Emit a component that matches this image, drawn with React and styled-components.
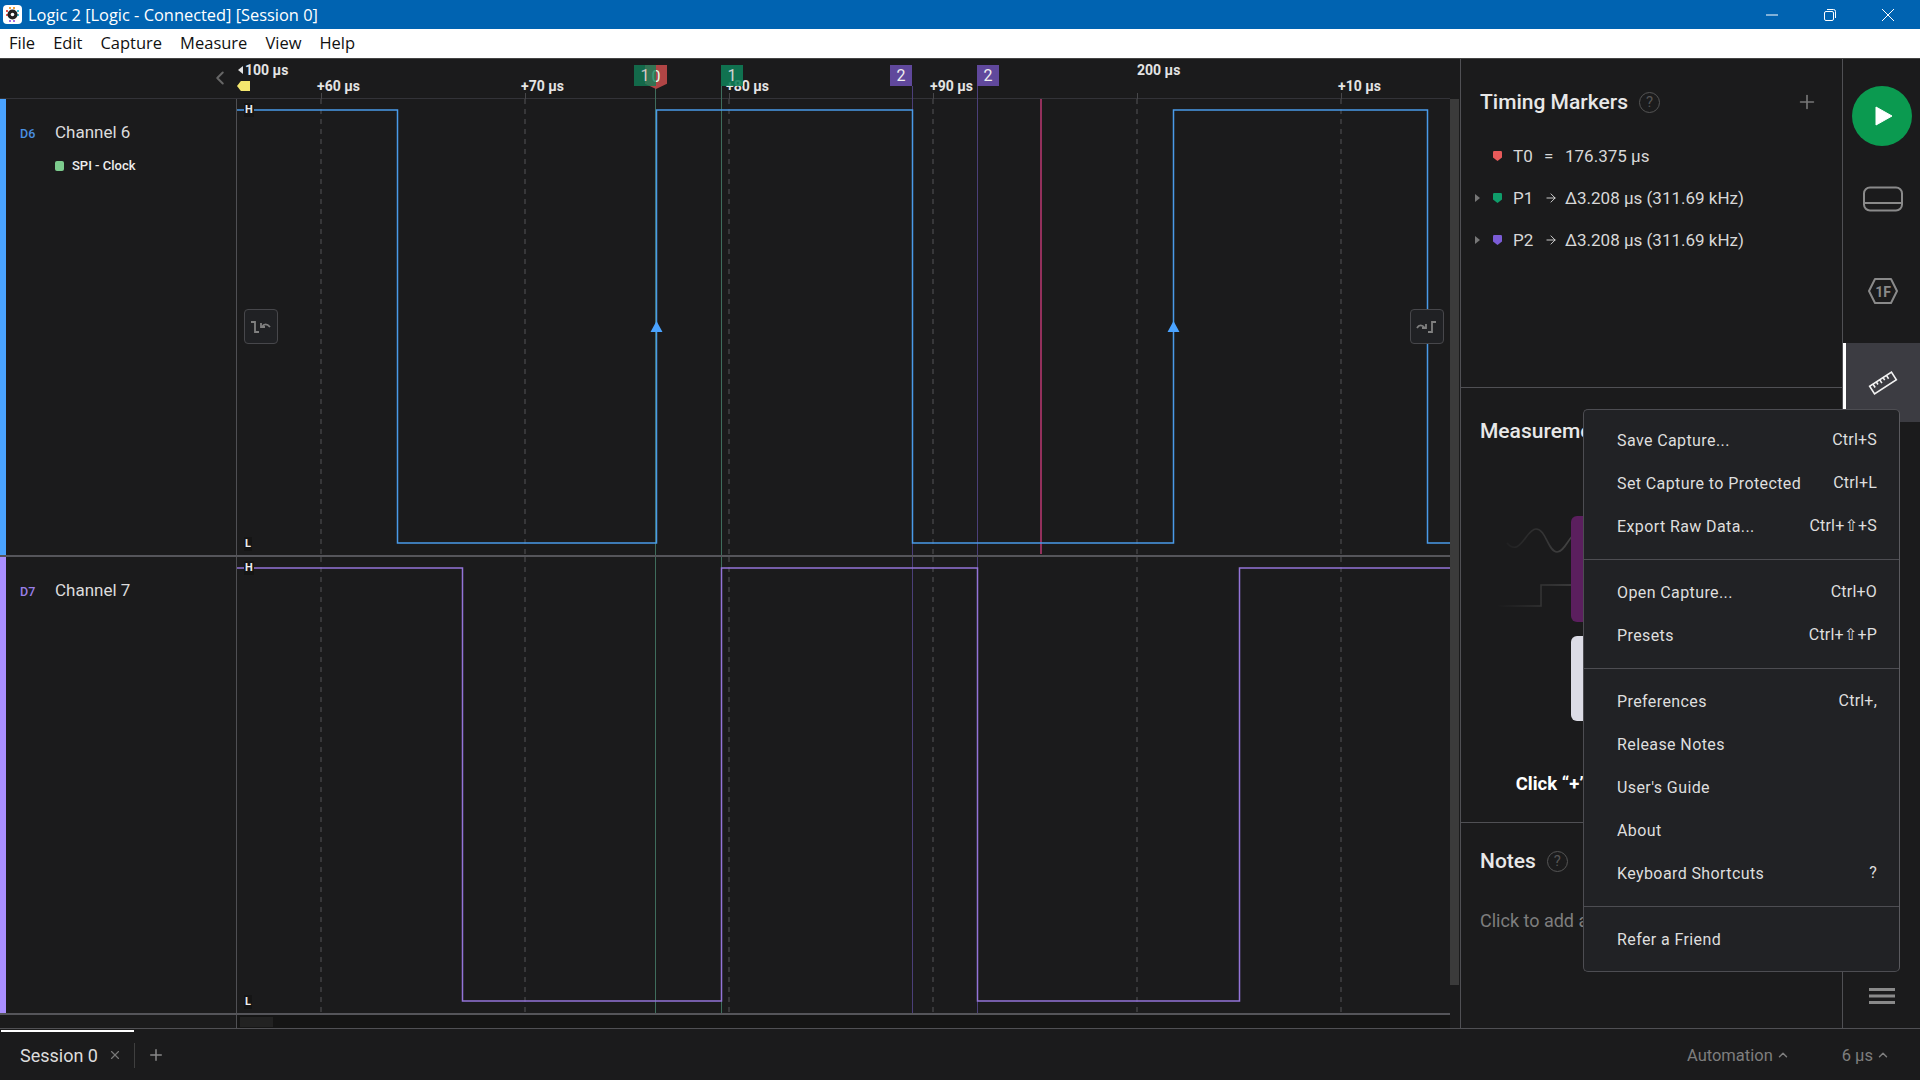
import React from "react";
import styled, { createGlobalStyle } from "styled-components";
import { ArrowRight, ChevronLeft, ChevronUp, Plus, X } from "lucide-react";

const Global = createGlobalStyle`
  html, body { margin: 0; padding: 0; background: #1b1b1b; overflow: hidden; }
  * { box-sizing: border-box; }
`;

const BG = "#1b1b1c";
const RULE = "#505054";

const Root = styled.div`
  position: relative;
  width: 1920px;
  height: 1080px;
  display: flex;
  flex-direction: column;
  background: ${BG};
  color: #ddd;
  font-family: Roboto, "Liberation Sans", sans-serif;
  overflow: hidden;
`;

const TitleBar = styled.header`
  height: 29px;
  flex: none;
  display: flex;
  align-items: center;
  padding: 0 3px 0 3px;
  background: #0063b1;
  color: #fff;
  font: 16.4px "Open Sans", sans-serif;
`;
const TitleText = styled.span`
  margin-left: 6px;
  flex: 1;
`;
const WinControl = styled.div`
  width: 58px;
  height: 29px;
  display: flex;
  align-items: center;
  justify-content: center;
`;

const MenuBar = styled.nav`
  height: 30px;
  flex: none;
  display: flex;
  align-items: center;
  padding: 0 0 3px 9px;
  gap: 18px;
  background: #fff;
  border-bottom: 1px solid #444;
  color: #111;
  font: 16.5px "Open Sans", sans-serif;
`;

const Workspace = styled.main`
  flex: none;
  height: 970px;
  display: flex;
  border-bottom: 1px solid ${RULE};
`;
const WaveColumn = styled.section`
  width: 1461px;
  flex: none;
  display: flex;
  border-right: 1px solid ${RULE};
`;
const Traces = styled.div`
  width: 1450px;
  display: flex;
  flex-direction: column;
`;
const VScrollTrack = styled.div`
  width: 10px;
  padding-top: 40px;
`;
const VScrollThumb = styled.div`
  width: 9px;
  height: 886px;
  background: #3b3b3b;
`;

const Ruler = styled.div`
  position: relative;
  height: 40px;
  flex: none;
  border-bottom: 1px solid #333338;
`;
const CollapseBtn = styled.span`
  position: absolute;
  left: 209px;
  top: 8px;
  color: #666;
  display: flex;
`;
const TimeLabel = styled.span`
  position: absolute;
  left: ${(p) => p.$x}px;
  top: ${(p) => p.$y}px;
  font-size: 14px;
  font-weight: 700;
  line-height: 16px;
  color: #e4e4e4;
  white-space: nowrap;
`;
const StartMark = styled.span`
  position: absolute;
  left: 237px;
  top: 22px;
  width: 13px;
  height: 10px;
  background: #f4e76e;
  clip-path: polygon(30% 0, 100% 0, 100% 100%, 30% 100%, 0 50%);
`;
const StartArrow = styled.span`
  position: absolute;
  left: 238px;
  top: 7px;
  width: 5px;
  height: 8px;
  background: #e4e4e4;
  clip-path: polygon(100% 0, 100% 100%, 0 50%);
`;
const Tick = styled.span`
  position: absolute;
  left: ${(p) => p.$x}px;
  top: ${(p) => p.$top}px;
  bottom: -1px;
  width: 1px;
  background: ${(p) => p.$color};
`;
const Flag = styled.span`
  position: absolute;
  left: ${(p) => p.$x}px;
  top: 6px;
  width: 22px;
  height: 21px;
  display: flex;
  align-items: center;
  justify-content: center;
  background: ${(p) => p.$color};
  opacity: ${(p) => p.$alpha || 1};
  color: #eee;
  font-size: 16px;
  line-height: 19px;
`;
const TimeFlag = styled.span`
  position: absolute;
  left: 645px;
  top: 6px;
  width: 22px;
  height: 24px;
  display: flex;
  align-items: flex-start;
  justify-content: center;
  padding-top: 2px;
  background: #b04545;
  color: #dfe;
  font-size: 16px;
  line-height: 19px;
  clip-path: polygon(0 0, 100% 0, 100% 78%, 50% 100%, 0 78%);
`;

const ChannelRow = styled.div`
  height: 458px;
  flex: none;
  display: flex;
  border-bottom: 2px solid #55555a;
`;
const Stripe = styled.div`
  width: 6px;
  flex: none;
  background: ${(p) => p.$color};
`;
const ChannelInfo = styled.div`
  width: 231px;
  flex: none;
  border-right: 1px solid ${RULE};
  padding: 22px 0 0 14px;
`;
const ChannelHead = styled.div`
  display: flex;
  align-items: center;
  height: 22px;
`;
const ChannelId = styled.span`
  width: 35px;
  font-size: 12.5px;
  font-weight: 500;
  color: ${(p) => p.$color};
  padding-top: 2px;
`;
const ChannelName = styled.span`
  font-size: 17px;
  color: #dcdcdc;
`;
const Analyzer = styled.div`
  display: flex;
  align-items: center;
  gap: 8px;
  margin: 15px 0 0 35px;
  font-size: 13px;
  font-weight: 500;
  color: #eee;
`;
const AnalyzerDot = styled.span`
  width: 9px;
  height: 10px;
  border-radius: 2px;
  background: #7ccb8d;
`;
const Plot = styled.div`
  position: relative;
  flex: 1;
`;
const PlotCanvas = styled.svg`
  display: block;
  width: 1213px;
  height: 456px;
`;
const LevelMark = styled.span`
  position: absolute;
  left: 7px;
  top: ${(p) => p.$top}px;
  padding: 0 1px;
  font-size: 11px;
  font-weight: 700;
  line-height: 14px;
  background: #151515;
  color: #eee;
`;
const EdgeButton = styled.button`
  position: absolute;
  top: 210px;
  ${(p) => (p.$side === "left" ? "left: 7px;" : "right: 6px;")}
  width: 34px;
  height: 35px;
  padding: 0;
  display: flex;
  align-items: center;
  justify-content: center;
  border: 1px solid #47474b;
  border-radius: 4px;
  background: #202124;
`;

const HScrollRow = styled.div`
  flex: 1;
  display: flex;
`;
const HScrollInfo = styled.div`
  width: 237px;
  flex: none;
  border-right: 1px solid ${RULE};
`;
const HScrollTrack = styled.div`
  flex: 1;
  background: #151515;
  padding: 2px 0 0 3px;
`;
const HScrollThumb = styled.div`
  width: 33px;
  height: 10px;
  background: #222;
`;

const Panel = styled.aside`
  width: 382px;
  flex: none;
  display: flex;
  flex-direction: column;
  border-right: 1px solid ${RULE};
`;
const TimingSection = styled.section`
  height: 329px;
  flex: none;
  padding-top: 30px;
  border-bottom: 1px solid ${RULE};
`;
const MeasureSection = styled.section`
  height: 435px;
  flex: none;
  padding-top: 30px;
  border-bottom: 1px solid ${RULE};
`;
const NotesSection = styled.section`
  flex: 1;
  padding-top: 25px;
`;
const SectionHead = styled.div`
  height: 26px;
  display: flex;
  align-items: center;
  padding: 0 24px 0 19px;
  gap: 11px;
`;
const SectionTitle = styled.h2`
  margin: 0;
  font-size: 21px;
  font-weight: 500;
  line-height: 26px;
  color: #e8e8e8;
`;
const HelpBadge = styled.span`
  width: 21px;
  height: 21px;
  display: flex;
  align-items: center;
  justify-content: center;
  border: 1.5px solid #555;
  border-radius: 50%;
  color: #555;
  font-size: 15px;
`;
const AddAction = styled.span`
  margin-left: auto;
  display: flex;
  color: #777;
`;
const MarkerList = styled.div`
  margin-top: 20px;
`;
const MarkerRow = styled.div`
  height: 42px;
  display: flex;
  align-items: center;
  padding-left: 14px;
  font-size: 17px;
  color: #d8d8d8;
`;
const Expander = styled.span`
  width: 18px;
  flex: none;
  display: block;
  &::before {
    content: "";
    display: ${(p) => (p.$hidden ? "none" : "block")};
    width: 5px;
    height: 8px;
    background: #777;
    clip-path: polygon(0 0, 100% 50%, 0 100%);
  }
`;
const MarkerName = styled.span`
  width: 31px;
  margin-left: 11px;
  flex: none;
`;
const Relation = styled.span`
  width: 21px;
  flex: none;
  display: flex;
`;
const Illustration = styled.svg`
  display: block;
  width: 381px;
  height: 270px;
  margin-top: 26px;
`;
const Hint = styled.p`
  margin: 32px 0 0;
  padding-right: 10px;
  text-align: center;
  font-size: 18.5px;
  font-weight: 700;
  line-height: 24px;
  color: #fff;
`;
const NotesHint = styled.p`
  margin: 35px 0 0 19px;
  font-size: 18px;
  line-height: 24px;
  color: #7e7e7e;
`;

const Sidebar = styled.nav`
  flex: 1;
  display: flex;
  flex-direction: column;
  align-items: stretch;
  gap: 13px;
  padding-top: 27px;
`;
const PlayButton = styled.div`
  width: 60px;
  height: 60px;
  margin-left: 9px;
  flex: none;
  display: flex;
  align-items: center;
  justify-content: center;
  padding-left: 4px;
  border-radius: 50%;
  background: #0b9a50;
`;
const SideTile = styled.div`
  height: 79px;
  flex: none;
  display: flex;
  align-items: center;
  justify-content: center;
  padding-left: 2px;
  ${(p) => p.$active && "background:#3c3c42; border-left:3px solid #fff; padding-left:0;"}
`;
const SideBottom = styled.div`
  margin-top: auto;
  height: 40px;
  display: flex;
  align-items: flex-start;
  justify-content: center;
`;

const Footer = styled.footer`
  flex: 1;
  display: flex;
  align-items: stretch;
  font-size: 16.5px;
`;
const SessionTab = styled.div`
  width: 133px;
  margin: 1px 0 0 1px;
  display: flex;
  align-items: center;
  padding: 0 0 2px 19px;
  border-top: 2px solid #fff;
  font-size: 18px;
  color: #ddd;
`;
const TabClose = styled.span`
  margin-left: 10px;
  display: flex;
  color: #777;
`;
const TabSep = styled.span`
  width: 1px;
  height: 25px;
  margin-top: 14px;
  background: #3f3f3f;
`;
const TabAdd = styled.span`
  margin-left: 12px;
  display: flex;
  align-items: center;
  color: #888;
`;
const StatusGroup = styled.div`
  margin-left: auto;
  display: flex;
  align-items: center;
  padding: 1px 30px 0 0;
  gap: 52px;
  color: #7e7e7e;
`;
const StatusItem = styled.span`
  display: flex;
  align-items: center;
  gap: 3px;
`;

const AppMenu = styled.div`
  position: absolute;
  left: 1583px;
  top: 409px;
  width: 317px;
  height: 563px;
  padding-top: 9px;
  background: #212225;
  border: 1px solid #4d4d52;
  border-radius: 5px;
  border-right-color: #5a5a5f;
`;
const MenuGroup = styled.div`
  padding: 11px 0;
  border-bottom: 1px solid ${(p) => (p.$last ? "transparent" : "#4d4d52")};
  &:first-child {
    padding-top: 0;
  }
`;
const MenuEntry = styled.div`
  height: 43px;
  display: flex;
  align-items: center;
  justify-content: space-between;
  padding: 0 22px 0 33px;
  font-size: 16px;
  letter-spacing: 0.4px;
  color: #dedede;
`;
const Shortcut = styled.span`
  padding-bottom: 3px;
  letter-spacing: 0.2px;
  font-family: Roboto, "DejaVu Sans", sans-serif;
`;

const GRID = [321, 525, 729, 933, 1137, 1341];
const GREEN_LINE = "#3f6d5c";
const PURPLE_LINE = "#4b3f78";
const MARKS = [
  [655.5, GREEN_LINE],
  [721.5, GREEN_LINE],
  [912.5, PURPLE_LINE],
  [977.5, PURPLE_LINE],
];

const Logo = () => (
  <svg width="19" height="19" viewBox="0 0 19 19">
    <rect width="19" height="19" rx="4" fill="#fff" />
    <path d="M3 6h2M3 10h2" stroke="#e5554f" strokeWidth="2" />
    <path d="M7 2v2M11 2v2" stroke="#f2a33a" strokeWidth="2" />
    <path d="M14 6h2M14 10h2" stroke="#3fc1d9" strokeWidth="2" />
    <path d="M7 15v2M11 15v2" stroke="#a56ee0" strokeWidth="2" />
    <circle cx="9.5" cy="9.5" r="5" fill="#222" />
    <circle cx="9.5" cy="9.5" r="1.8" fill="#fff" />
  </svg>
);

const TraceGrid = ({ top, bottom }) => (
  <>
    {GRID.map((x) => (
      <line key={x} x1={x} x2={x} y1={top} y2={bottom} stroke="#47474a" strokeWidth="1.3" strokeDasharray="5 5" />
    ))}
    {MARKS.map(([x, c]) => (
      <line key={x} x1={x} x2={x} y1={top} y2={bottom} stroke={c} strokeWidth="1" />
    ))}
  </>
);

const StepBack = () => (
  <svg width="22" height="16" viewBox="0 0 22 16" fill="none" stroke="#808080" strokeWidth="1.8">
    <path d="M1 3h4v10h4" />
    <path d="M12 8c2-3.5 5-3.5 8 0" />
    <path d="M11 4v4h4" />
  </svg>
);
const StepForward = () => (
  <svg width="22" height="16" viewBox="0 0 22 16" fill="none" stroke="#808080" strokeWidth="1.8">
    <path d="M12 13h4V3h4" />
    <path d="M1 9c2-3.5 5-3.5 8 0" />
    <path d="M10 5v4H6" />
  </svg>
);

const MarkerGlyph = ({ color }) => (
  <svg width="9" height="10" viewBox="0 0 9 10" style={{ flex: "none" }}>
    <path d="M0 1.2Q0 0 1.2 0h6.6Q9 0 9 1.2V6.5L4.5 10 0 6.5z" fill={color} />
  </svg>
);

const MarkerLine = ({ color, name, expand, children, equals }) => (
  <MarkerRow>
    <Expander $hidden={!expand} />
    <MarkerGlyph color={color} />
    <MarkerName>{name}</MarkerName>
    <Relation>{equals ? "=" : <ArrowRight size={14} strokeWidth={1.6} />}</Relation>
    <span>{children}</span>
  </MarkerRow>
);

const MenuRows = [
  [["Save Capture...", "Ctrl+S"], ["Set Capture to Protected", "Ctrl+L"], ["Export Raw Data...", "Ctrl+⇧+S"]],
  [["Open Capture...", "Ctrl+O"], ["Presets", "Ctrl+⇧+P"]],
  [["Preferences", "Ctrl+,"], ["Release Notes"], ["User's Guide"], ["About"], ["Keyboard Shortcuts", "?"]],
  [["Refer a Friend"]],
];

export default function App() {
  return (
    <Root>
      <Global />
      <TitleBar>
        <Logo />
        <TitleText>Logic 2 [Logic - Connected] [Session 0]</TitleText>
        <WinControl>
          <svg width="14" height="14" viewBox="0 0 14 14"><path d="M1 7h12" stroke="#fff" strokeWidth="1" /></svg>
        </WinControl>
        <WinControl>
          <svg width="14" height="14" viewBox="0 0 14 14" fill="none" stroke="#fff"><rect x="1.5" y="3.5" width="9" height="9" rx="1.5" /><path d="M4 1.5h6.5q2 0 2 2V10" /></svg>
        </WinControl>
        <WinControl>
          <svg width="14" height="14" viewBox="0 0 14 14"><path d="M1 1l12 12M13 1L1 13" stroke="#fff" strokeWidth="1" /></svg>
        </WinControl>
      </TitleBar>
      <MenuBar>
        {["File", "Edit", "Capture", "Measure", "View", "Help"].map((m) => (
          <span key={m}>{m}</span>
        ))}
      </MenuBar>
      <Workspace>
        <WaveColumn>
          <Traces>
            <Ruler>
              <CollapseBtn><ChevronLeft size={22} strokeWidth={2.2} /></CollapseBtn>
              <StartArrow />
              <TimeLabel $x={245} $y={3}>100 µs</TimeLabel>
              <StartMark />
              {[[317, "+60 µs"], [521, "+70 µs"], [726, "+80 µs"], [930, "+90 µs"], [1338, "+10 µs"]].map(([x, t]) => (
                <TimeLabel key={t} $x={x} $y={19}>{t}</TimeLabel>
              ))}
              <TimeLabel $x={1137} $y={3}>200 µs</TimeLabel>
              {GRID.map((x) => (
                <Tick key={x} $x={x} $top={34} $color="#47474a" />
              ))}
              {MARKS.map(([x, c]) => (
                <Tick key={x} $x={Math.floor(x)} $top={27} $color={c} />
              ))}
              <TimeFlag>0</TimeFlag>
              <Flag $x={634} $color="#118058" $alpha={0.78}>1</Flag>
              <Flag $x={721} $color="#0f7f58" $alpha={0.88}>1</Flag>
              <Flag $x={890} $color="#60489c">2</Flag>
              <Flag $x={977} $color="#60489c">2</Flag>
            </Ruler>
            <ChannelRow>
              <Stripe $color="#4aa3ff" />
              <ChannelInfo>
                <ChannelHead>
                  <ChannelId $color="#4a90e2">D6</ChannelId>
                  <ChannelName>Channel 6</ChannelName>
                </ChannelHead>
                <Analyzer>
                  <AnalyzerDot />
                  SPI - Clock
                </Analyzer>
              </ChannelInfo>
              <Plot>
                <PlotCanvas viewBox="237 99 1213 456">
                  <TraceGrid top={99} bottom={555} />
                  <line x1="1041" x2="1041" y1="99" y2="554" stroke="#93305c" strokeWidth="2" />
                  <path d="M237 110H397.5V543H656.5V110H912.5V543H1173.5V110H1427.5V543H1450" fill="none" stroke="#4a9ae8" strokeWidth="1.5" />
                  <path d="M656.5 321l6 11h-12zM1173.5 321l6 11h-12z" fill="#4aa3ff" />
                </PlotCanvas>
                <LevelMark $top={4}>H</LevelMark>
                <LevelMark $top={438}>L</LevelMark>
                <EdgeButton $side="left"><StepBack /></EdgeButton>
                <EdgeButton $side="right"><StepForward /></EdgeButton>
              </Plot>
            </ChannelRow>
            <ChannelRow>
              <Stripe $color="#a98eff" />
              <ChannelInfo>
                <ChannelHead>
                  <ChannelId $color="#9a7fe8">D7</ChannelId>
                  <ChannelName>Channel 7</ChannelName>
                </ChannelHead>
              </ChannelInfo>
              <Plot>
                <PlotCanvas viewBox="237 557 1213 456">
                  <TraceGrid top={557} bottom={1013} />
                  <path d="M237 568H462.5V1001H721.5V568H977.5V1001H1239.5V568H1450" fill="none" stroke="#9474d8" strokeWidth="1.5" />
                </PlotCanvas>
                <LevelMark $top={4}>H</LevelMark>
                <LevelMark $top={438}>L</LevelMark>
              </Plot>
            </ChannelRow>
            <HScrollRow>
              <HScrollInfo />
              <HScrollTrack><HScrollThumb /></HScrollTrack>
            </HScrollRow>
          </Traces>
          <VScrollTrack><VScrollThumb /></VScrollTrack>
        </WaveColumn>
        <Panel>
          <TimingSection>
            <SectionHead>
              <SectionTitle>Timing Markers</SectionTitle>
              <HelpBadge>?</HelpBadge>
              <AddAction><Plus size={22} strokeWidth={1.8} /></AddAction>
            </SectionHead>
            <MarkerList>
              <MarkerLine color="#e85a5a" name="T0" equals>176.375 µs</MarkerLine>
              <MarkerLine color="#0f9d6a" name="P1" expand>Δ3.208 µs (311.69 kHz)</MarkerLine>
              <MarkerLine color="#7b5cd6" name="P2" expand>Δ3.208 µs (311.69 kHz)</MarkerLine>
            </MarkerList>
          </TimingSection>
          <MeasureSection>
            <SectionHead>
              <SectionTitle>Measurements</SectionTitle>
            </SectionHead>
            <Illustration viewBox="1461 470 381 270">
              <defs>
                <linearGradient id="fadeWave" gradientUnits="userSpaceOnUse" x1="1497" x2="1583" y1="0" y2="0">
                  <stop offset="0" stopColor="#4a4a4a" stopOpacity="0" />
                  <stop offset="1" stopColor="#4a4a4a" />
                </linearGradient>
              </defs>
              <path d="M1507 543C1520 558 1526 529 1536 529C1546 529 1548 552 1557 552C1566 552 1570 530 1583 530H1600" fill="none" stroke="url(#fadeWave)" strokeWidth="1.6" />
              <path d="M1497 606H1541V585H1600" fill="none" stroke="url(#fadeWave)" strokeWidth="1.6" />
              <rect x="1571" y="516" width="120" height="106" rx="6" fill="#5b1f5e" />
              <rect x="1571" y="636" width="120" height="85" rx="6" fill="#dcdce6" />
            </Illustration>
            <Hint>Click “+” to add a measurement</Hint>
          </MeasureSection>
          <NotesSection>
            <SectionHead>
              <SectionTitle>Notes</SectionTitle>
              <HelpBadge>?</HelpBadge>
            </SectionHead>
            <NotesHint>Click to add a note</NotesHint>
          </NotesSection>
        </Panel>
        <Sidebar>
          <PlayButton>
            <svg width="18" height="20" viewBox="0 0 18 20"><path d="M1 1l16 9L1 19z" fill="#fff" stroke="#fff" strokeLinejoin="round" /></svg>
          </PlayButton>
          <SideTile>
            <svg width="42" height="26" viewBox="0 0 42 26" fill="none" stroke="#8a8a8a" strokeWidth="2">
              <rect x="2" y="1.5" width="38" height="23" rx="6" />
              <path d="M2 17h38" />
            </svg>
          </SideTile>
          <SideTile>
            <svg width="32" height="28" viewBox="0 0 32 28">
              <path d="M8 2h16l6 12-6 12H8L2 14z" fill="none" stroke="#8a8a8a" strokeWidth="2" strokeLinejoin="round" />
              <text x="16" y="19.5" textAnchor="middle" fontSize="14" fontWeight="700" fontFamily="Roboto" fill="#8a8a8a">1F</text>
            </svg>
          </SideTile>
          <SideTile $active>
            <svg width="30" height="26" viewBox="0 0 30 26" fill="none" stroke="#f2f2f2" strokeWidth="1.6">
              <g transform="rotate(-33 15 13)">
                <rect x="2" y="8.5" width="26" height="9" />
                <path d="M6 8.5v4M10 8.5v3M14 8.5v4M18 8.5v3M22 8.5v4" />
              </g>
            </svg>
          </SideTile>
          <SideBottom>
            <svg width="26" height="16" viewBox="0 0 26 16" fill="#8a8a8a">
              <rect y="0" width="26" height="3" />
              <rect y="6.5" width="26" height="3" />
              <rect y="13" width="26" height="3" />
            </svg>
          </SideBottom>
        </Sidebar>
      </Workspace>
      <Footer>
        <SessionTab>
          Session 0
          <TabClose><X size={14} strokeWidth={2} /></TabClose>
        </SessionTab>
        <TabSep />
        <TabAdd><Plus size={18} strokeWidth={2} /></TabAdd>
        <StatusGroup>
          <StatusItem>Automation <ChevronUp size={14} strokeWidth={2.5} /></StatusItem>
          <StatusItem>6 µs <ChevronUp size={14} strokeWidth={2.5} /></StatusItem>
        </StatusGroup>
      </Footer>
      <AppMenu>
        {MenuRows.map((group, i) => (
          <MenuGroup key={i} $last={i === MenuRows.length - 1}>
            {group.map(([label, key]) => (
              <MenuEntry key={label}>
                <span>{label}</span>
                {key && <Shortcut>{key}</Shortcut>}
              </MenuEntry>
            ))}
          </MenuGroup>
        ))}
      </AppMenu>
    </Root>
  );
}
